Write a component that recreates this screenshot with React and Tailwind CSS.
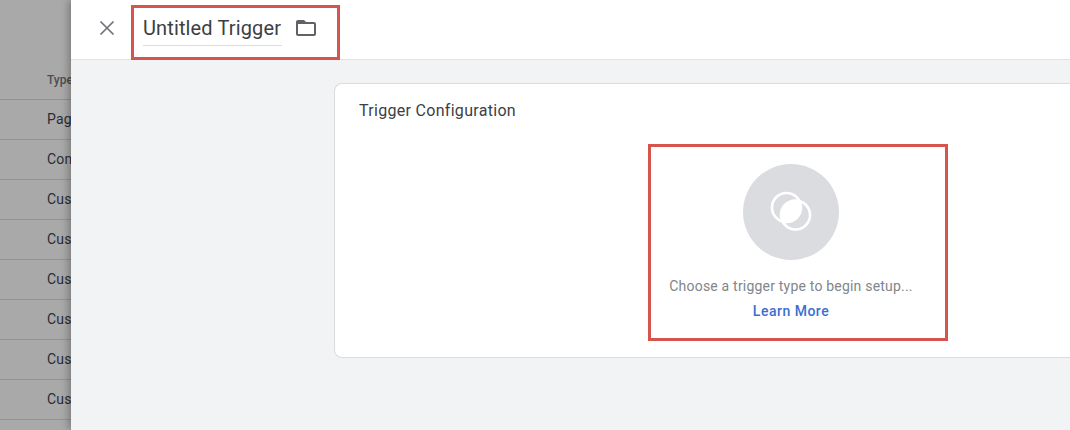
export default function App() {
  const rows = ["Pag", "Con", "Cus", "Cus", "Cus", "Cus", "Cus", "Cus"];
  return (
    <div className="flex h-[430px] w-[1070px] overflow-hidden bg-[#a9a9a9] font-['Roboto',sans-serif]">
      <div className="w-[71px] shrink-0 overflow-hidden pt-[60px] text-[14px] text-[#2c2c33]">
        <div className="flex h-10 items-center border-b border-[#909090] pl-[47px] text-[12px] font-medium text-[#4d4d4f]">
          Type
        </div>
        {rows.map((r, i) => (
          <div key={i} className="flex h-10 items-center border-b border-[#939393] pl-[47px] tracking-[0.2px]">
            {r}
          </div>
        ))}
      </div>
      <div className="relative flex min-w-0 flex-1 flex-col bg-[#f1f3f4] shadow-[-2px_0_8px_rgba(0,0,0,0.3)]">
        <header className="flex h-[60px] shrink-0 items-start border-b border-[#e0e2e4] bg-white pl-6">
          <button className="mt-4 text-[#6f7377]">
            <svg width="24" height="24" viewBox="0 0 24 24" fill="none" stroke="currentColor" strokeWidth="1.7">
              <path d="M5.5 5.5L18.5 18.5M18.5 5.5L5.5 18.5" />
            </svg>
          </button>
          <div className="ml-3 mt-[5px] flex h-[55px] w-[209px] border-[3px] border-[#d5544c] pl-[9px]">
            <div className="mt-[5px] h-[33px] w-[139px] border-b border-[#dadce0] text-[20px] leading-[31px] tracking-[0.13px] text-[#3c4043]">
              Untitled Trigger
            </div>
            <svg className="ml-[12px] mt-[8px] text-[#5f6368]" width="24" height="24" viewBox="0 0 24 24" fill="currentColor">
              <path d="M20 6h-8l-2-2H4c-1.1 0-1.99.9-1.99 2L2 18c0 1.1.9 2 2 2h16c1.1 0 2-.9 2-2V8c0-1.1-.9-2-2-2zm0 12H4V8h16v10z" />
            </svg>
          </div>
        </header>
        <main className="flex-1 pl-[263px] pt-[23px]">
          <section className="h-[275px] w-[760px] rounded-l-lg border border-r-0 border-[#dadce0] bg-white pl-6 pt-[17px]">
            <h2 className="text-[16px] leading-5 tracking-[0.3px] text-[#3c4043]">Trigger Configuration</h2>
            <div className="ml-[289px] mt-[23px] flex h-[197px] w-[300px] flex-col items-center border-[3px] border-[#d5544c] pr-[14px] pt-[17px]">
              <svg width="96" height="96" viewBox="0 0 96 96">
                <defs>
                  <clipPath id="lens">
                    <circle cx="43.5" cy="43.5" r="14.5" />
                  </clipPath>
                </defs>
                <circle cx="48" cy="48" r="48" fill="#dadce0" />
                <circle cx="52.5" cy="51" r="14.5" fill="#fff" clipPath="url(#lens)" />
                <circle cx="43.5" cy="43.5" r="14.5" fill="none" stroke="#fff" strokeWidth="2.6" />
                <circle cx="52.5" cy="51" r="14.5" fill="none" stroke="#fff" strokeWidth="2.6" />
              </svg>
              <p className="mt-4 whitespace-nowrap text-[14px] leading-5 tracking-[0.2px] text-[#80868b]">Choose a trigger type to begin setup...</p>
              <a className="mt-[5px] text-[14px] font-medium leading-5 tracking-[0.5px] text-[#3b6fcf]">Learn More</a>
            </div>
          </section>
        </main>
      </div>
    </div>
  );
}
